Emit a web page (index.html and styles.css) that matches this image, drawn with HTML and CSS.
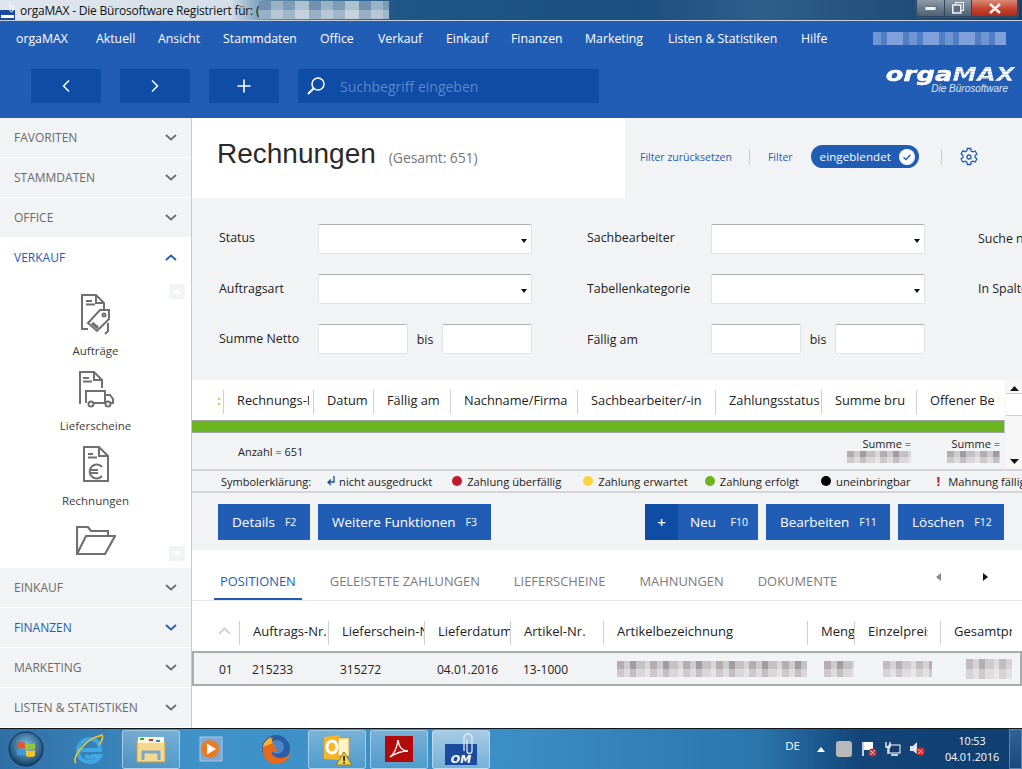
FILE: index.html
```html
<!DOCTYPE html>
<html lang="de">
<head>
<meta charset="utf-8">
<title>orgaMAX - Rechnungen</title>
<link rel="stylesheet" href="styles.css">
</head>
<body>
<div class="window">
  <div class="titlebar">
    <svg class="app-icon" width="15" height="17" viewBox="0 0 15 17"><rect y="7" width="15" height="10" fill="#1c4a9c"/><path d="M10 1v7a2 2 0 0 0 3 0V2" fill="none" stroke="#fff" stroke-width="1"/><rect x="1" y="12" width="13" height="3" fill="#fff"/></svg>
    <span class="title-text">orgaMAX - Die Bürosoftware Registriert für: (</span>
    <span class="mosaic mosaic-title"></span>
    <div class="win-controls">
      <span class="win-btn win-min"><svg width="12" height="5" viewBox="0 0 12 5"><rect width="11" height="4" y="0.5" fill="#eef2f6" stroke="#3a4a5c" stroke-width=".6"/></svg></span>
      <span class="win-btn win-max"><svg width="12" height="12" viewBox="0 0 12 12"><rect x="3.5" y=".5" width="8" height="8" fill="none" stroke="#eef2f6"/><rect x=".8" y="3" width="8" height="8" fill="#5d6f80" stroke="#eef2f6" stroke-width="1.5"/></svg></span>
      <span class="win-btn win-close"><svg width="14" height="11" viewBox="0 0 14 11"><path d="M2 1l10 9M12 1L2 10" stroke="#f4efee" stroke-width="2.6"/></svg></span>
    </div>
  </div>

  <header class="app-header">
    <nav class="menu">
      <a class="menu-item">orgaMAX</a>
      <a class="menu-item">Aktuell</a>
      <a class="menu-item">Ansicht</a>
      <a class="menu-item">Stammdaten</a>
      <a class="menu-item">Office</a>
      <a class="menu-item">Verkauf</a>
      <a class="menu-item">Einkauf</a>
      <a class="menu-item">Finanzen</a>
      <a class="menu-item">Marketing</a>
      <a class="menu-item">Listen &amp; Statistiken</a>
      <a class="menu-item">Hilfe</a>
      <span class="mosaic mosaic-user"></span>
    </nav>
    <div class="toolbar">
      <button class="tool-btn"><svg width="10" height="14" viewBox="0 0 10 14"><path d="M8 1.5L2.5 7 8 12.5" fill="none" stroke="#fff" stroke-width="1.5"/></svg></button>
      <button class="tool-btn"><svg width="10" height="14" viewBox="0 0 10 14"><path d="M2 1.5L7.5 7 2 12.5" fill="none" stroke="#fff" stroke-width="1.5"/></svg></button>
      <button class="tool-btn"><svg width="14" height="14" viewBox="0 0 14 14"><path d="M7 .5v13M.5 7h13" fill="none" stroke="#fff" stroke-width="1.6"/></svg></button>
      <div class="search">
        <svg width="20" height="20" viewBox="0 0 20 20"><circle cx="12" cy="8" r="6" fill="none" stroke="#fff" stroke-width="1.5"/><path d="M7.5 12.5L2 18" fill="none" stroke="#fff" stroke-width="2"/></svg>
        <span class="search-text">Suchbegriff eingeben</span>
      </div>
      <div class="logo">
        <div class="logo-main">orga<span class="logo-max">MAX</span></div>
        <div class="logo-sub">Die Bürosoftware</div>
      </div>
    </div>
  </header>

  <div class="main">
    <aside class="sidebar">
      <div class="side-item"><span>FAVORITEN</span><svg class="chev" width="12" height="7" viewBox="0 0 12 7"><path d="M1 1l5 4.5L11 1" fill="none" stroke="#6e6e6e" stroke-width="1.8"/></svg></div>
      <div class="side-item"><span>STAMMDATEN</span><svg class="chev" width="12" height="7" viewBox="0 0 12 7"><path d="M1 1l5 4.5L11 1" fill="none" stroke="#6e6e6e" stroke-width="1.8"/></svg></div>
      <div class="side-item"><span>OFFICE</span><svg class="chev" width="12" height="7" viewBox="0 0 12 7"><path d="M1 1l5 4.5L11 1" fill="none" stroke="#6e6e6e" stroke-width="1.8"/></svg></div>
      <div class="side-item side-open"><span>VERKAUF</span><svg class="chev" width="12" height="7" viewBox="0 0 12 7"><path d="M1 6l5-4.5L11 6" fill="none" stroke="#225db5" stroke-width="1.8"/></svg></div>
      <div class="side-panel">
        <span class="side-scroll side-scroll-up"><svg width="10" height="5" viewBox="0 0 10 5"><path d="M5 0l5 5H0z" fill="#fff"/></svg></span>
        <div class="sub-item sub-first">
          <svg class="sub-icon" width="32" height="42" viewBox="0 0 32 42"><g fill="none" stroke="#707070" stroke-width="2"><path d="M8 36H2V2h14l8 8v8M16 2v8h8"/><path d="M6 8h6M6 11.500h9"/><path d="M8 30l12-13 9 0 0 9-12 12z"/><circle cx="24" cy="22" r="1.500"/><path d="M12 30l6 5" stroke-width="3"/><path d="M28 30v8l-3 3"/></g></svg>
          <span class="sub-label">Aufträge</span>
        </div>
        <div class="sub-item">
          <svg class="sub-icon" width="36" height="38" viewBox="0 0 36 38"><g fill="none" stroke="#707070" stroke-width="2"><path d="M2 34V2h14l8 8v8M16 2v8h8"/><path d="M5 8h6M5 11.500h9"/><path d="M8 33V21h19v12M27 25h5l3 4v4h-3"/><circle cx="13" cy="34" r="2.500"/><circle cx="30" cy="34" r="2.500"/><path d="M16 33h11"/></g></svg>
          <span class="sub-label">Lieferscheine</span>
        </div>
        <div class="sub-item">
          <svg class="sub-icon" width="28" height="38" viewBox="0 0 28 38"><g fill="none" stroke="#707070" stroke-width="2"><path d="M2 36V2h15l9 9v25zM17 2v9h9"/><path d="M6 9h5M6 12.500h9" /><path d="M20 22a7 7 0 1 0 0 9M7 25h9M7 28h9" stroke-width="2"/></g></svg>
          <span class="sub-label">Rechnungen</span>
        </div>
        <div class="sub-item sub-last">
          <svg class="sub-icon" width="40" height="30" viewBox="0 0 40 30"><g fill="none" stroke="#707070" stroke-width="2.200"><path d="M1 29V2h11l3 4h17v5"/><path d="M1 29h28l10-18H10z"/></g></svg>
        </div>
        <span class="side-scroll side-scroll-down"><svg width="10" height="5" viewBox="0 0 10 5"><path d="M5 5L0 0h10z" fill="#fff"/></svg></span>
      </div>
      <div class="side-item"><span>EINKAUF</span><svg class="chev" width="12" height="7" viewBox="0 0 12 7"><path d="M1 1l5 4.500L11 1" fill="none" stroke="#6e6e6e" stroke-width="1.800"/></svg></div>
      <div class="side-item side-blue"><span>FINANZEN</span><svg class="chev" width="12" height="7" viewBox="0 0 12 7"><path d="M1 1l5 4.500L11 1" fill="none" stroke="#225db5" stroke-width="1.800"/></svg></div>
      <div class="side-item"><span>MARKETING</span><svg class="chev" width="12" height="7" viewBox="0 0 12 7"><path d="M1 1l5 4.500L11 1" fill="none" stroke="#6e6e6e" stroke-width="1.800"/></svg></div>
      <div class="side-item"><span>LISTEN &amp; STATISTIKEN</span><svg class="chev" width="12" height="7" viewBox="0 0 12 7"><path d="M1 1l5 4.500L11 1" fill="none" stroke="#6e6e6e" stroke-width="1.800"/></svg></div>
    </aside>

    <section class="content">
      <div class="page-head">
        <div class="page-title">
          <h1>Rechnungen</h1>
          <span class="total">(Gesamt: 651)</span>
        </div>
        <div class="page-actions">
          <a class="act-link">Filter zurücksetzen</a>
          <span class="act-sep"></span>
          <a class="act-link">Filter</a>
          <span class="pill">eingeblendet<svg width="16" height="16" viewBox="0 0 16 16"><circle cx="8" cy="8" r="8" fill="#fff"/><path d="M4.500 8.200l2.500 2.300 4.300-4.500" fill="none" stroke="#225db5" stroke-width="1.500"/></svg></span>
          <span class="act-sep act-sep2"></span>
          <svg width="20" height="20" viewBox="0 0 20 20"><g fill="none" stroke="#225db5" stroke-width="1.300"><path d="M8.300 1.500h3.400l.5 2.500 1.600.9 2.400-.9 1.700 3-1.900 1.700v1.600l1.900 1.700-1.700 3-2.400-.9-1.600.9-.5 2.500H8.300l-.5-2.500-1.600-.9-2.400.9-1.700-3 1.900-1.700V8.500L2.100 6.800l1.700-3 2.400.9 1.600-.9z"/><circle cx="10" cy="10" r="2"/></g></svg>
        </div>
      </div>

      <div class="filters">
        <label class="f-label f-up">Status</label>
        <div class="f-select"></div>
        <span></span>
        <label class="f-label f-up">Sachbearbeiter</label>
        <div class="f-select"></div>
        <span></span>
        <label class="f-label">Suche nach</label>

        <label class="f-label">Auftragsart</label>
        <div class="f-select"></div>
        <span></span>
        <label class="f-label">Tabellenkategorie</label>
        <div class="f-select"></div>
        <span></span>
        <label class="f-label">In Spalte</label>

        <label class="f-label">Summe Netto</label>
        <div class="f-range"><div class="f-input"></div><span class="f-bis">bis</span><div class="f-input"></div></div>
        <span></span>
        <label class="f-label f-down">Fällig am</label>
        <div class="f-range"><div class="f-input"></div><span class="f-bis">bis</span><div class="f-input"></div></div>
      </div>

      <div class="grid-wrap">
        <div class="grid-main">
          <div class="grid-head">
            <div class="gh gh0"><span class="drag">:</span></div>
            <div class="gh w90"><span class="clip clip-72">Rechnungs-Nr.</span></div>
            <div class="gh w60">Datum</div>
            <div class="gh w77">Fällig am</div>
            <div class="gh w127">Nachname/Firma</div>
            <div class="gh w138">Sachbearbeiter/-in</div>
            <div class="gh w106">Zahlungsstatus</div>
            <div class="gh w95"><span class="clip clip-70">Summe brutto</span></div>
            <div class="gh wrest">Offener Betrag</div>
          </div>
          <div class="green-row"></div>
          <div class="summary">
            <span class="count">Anzahl = 651</span>
            <div class="sum sum1"><span>Summe =</span><span class="mosaic mosaic-sum"></span></div>
            <div class="sum sum2"><span>Summe =</span><span class="mosaic mosaic-sum"></span></div>
          </div>
        </div>
        <div class="scrollbar">
          <svg width="9" height="5" viewBox="0 0 9 5"><path d="M4.500 0l4.500 5H0z" fill="#111"/></svg>
          <span class="thumb"></span>
          <svg width="9" height="5" viewBox="0 0 9 5"><path d="M4.500 5L0 0h9z" fill="#111"/></svg>
        </div>
      </div>

      <div class="legend">
        <span class="lg-title">Symbolerklärung:</span>
        <span class="lg lg1"><svg width="9" height="12" viewBox="0 0 9 12"><path d="M8 1v6H3M5 4.500L2 7.200 5 10" fill="none" stroke="#1c4a9c" stroke-width="1.300"/></svg>nicht ausgedruckt</span>
        <span class="lg lg2"><i class="dot red"></i>Zahlung überfällig</span>
        <span class="lg lg3"><i class="dot yellow"></i>Zahlung erwartet</span>
        <span class="lg lg4"><i class="dot green"></i>Zahlung erfolgt</span>
        <span class="lg lg5"><i class="dot black"></i>uneinbringbar</span>
        <span class="lg lg6"><b class="excl">!</b>Mahnung fällig</span>
      </div>

      <div class="actions">
        <button class="btn b-details">Details<small>F2</small></button>
        <button class="btn b-more">Weitere Funktionen<small>F3</small></button>
        <button class="btn b-new"><span class="plus">+</span><span class="new-label">Neu<small>F10</small></span></button>
        <button class="btn b-edit">Bearbeiten<small>F11</small></button>
        <button class="btn b-del">Löschen<small>F12</small></button>
      </div>

      <div class="detail">
        <div class="tabs">
          <a class="tab tab-on">POSITIONEN</a>
          <a class="tab">GELEISTETE ZAHLUNGEN</a>
          <a class="tab">LIEFERSCHEINE</a>
          <a class="tab">MAHNUNGEN</a>
          <a class="tab">DOKUMENTE</a>
          <span class="tab-arrows">
            <svg width="5" height="8" viewBox="0 0 5 8"><path d="M5 0v8L0 4z" fill="#888"/></svg>
            <svg width="5" height="8" viewBox="0 0 5 8"><path d="M0 0v8l5-4z" fill="#111"/></svg>
          </span>
        </div>
        <div class="pos-head">
          <div class="ph p48"><svg width="13" height="8" viewBox="0 0 13 8"><path d="M1 7l5.500-5.500L12 7" fill="none" stroke="#c8c8c8" stroke-width="1.600"/></svg></div>
          <div class="ph p89">Auftrags-Nr.</div>
          <div class="ph p96">Lieferschein-Nr.</div>
          <div class="ph p86">Lieferdatum</div>
          <div class="ph p93">Artikel-Nr.</div>
          <div class="ph p204">Artikelbezeichnung</div>
          <div class="ph p47">Menge</div>
          <div class="ph p86"><span class="clip clip-60">Einzelpreis</span></div>
          <div class="ph prest">Gesamtpreis</div>
        </div>
        <div class="pos-row">
          <span class="pc q33">01</span>
          <span class="pc q88">215233</span>
          <span class="pc q97">315272</span>
          <span class="pc q86">04.01.2016</span>
          <span class="pc q94">13-1000</span>
          <span class="mosaic mosaic-desc"></span>
          <span class="mosaic mosaic-qty"></span>
          <span class="mosaic mosaic-price"></span>
          <span class="mosaic mosaic-total"></span>
        </div>
      </div>
    </section>
  </div>

  <footer class="taskbar">
    <svg class="orb" width="36" height="36" viewBox="0 0 36 36"><defs><radialGradient id="orbg" cx=".5" cy=".4" r=".6"><stop offset="0" stop-color="#7fc0e8"/><stop offset="1" stop-color="#123f66"/></radialGradient></defs><circle cx="18" cy="18" r="17" fill="url(#orbg)" stroke="#123049"/><path d="M9 12q4-2 8 0v6q-4-2-8 0z" fill="#e8552a"/><path d="M18 12q4 2 9 0v6q-5 2-9 0z" fill="#8dc63f"/><path d="M9 19q4-2 8 0v6q-4-2-8 0z" fill="#3a9ce0"/><path d="M18 19q4 2 9 0v6q-5 2-9 0z" fill="#f7c52b"/></svg>
    <svg class="tb-ie" width="32" height="32" viewBox="0 0 32 32"><path d="M8 17h20c0-7-4-11-10-11S6 11 6 18s5 11 12 11c5 0 8-2 10-6h-7c-1 2-6 2-7-1" fill="none" stroke="#3fa7e6" stroke-width="4"/><path d="M4 30C-1 26 12 6 30 2c2 3-1 7-3 10" fill="none" stroke="#f3c422" stroke-width="1.600"/></svg>
    <span class="tb-btn tb-explorer"><svg width="32" height="30" viewBox="0 0 32 30"><path d="M2 6h10l2 2h16v20H2z" fill="#f4d88e" stroke="#c69c3f"/><rect x="3" y="3" width="26" height="6" fill="#fff6d8"/><rect x="5" y="4" width="4" height="2" fill="#3ea63e"/><rect x="14" y="5" width="4" height="2" fill="#c33"/><rect x="21" y="6" width="4" height="2" fill="#38c"/><path d="M8 26V18h16v8" fill="none" stroke="#7ba7c9" stroke-width="3"/></svg></span>
    <svg class="tb-wmp" width="28" height="28" viewBox="0 0 28 28"><rect x="2" y="2" width="22" height="24" fill="#7ea9d3" stroke="#a9c7e2"/><circle cx="12" cy="14" r="9" fill="#ea7a1c"/><path d="M9 8.500l9 5.500-9 5.500z" fill="#fff"/></svg>
    <svg class="tb-fx" width="32" height="32" viewBox="0 0 32 32"><circle cx="17" cy="16" r="14" fill="#2a5fa8"/><circle cx="18" cy="14" r="7" fill="#4a86c8"/><path d="M4 13C2 24 9 31 17 31c8 0 14-5 15-13-2 5-6 7-11 7-6 0-9-4-8-7 3 1 5 0 6-1-3-1-4-3-3-5-3 0-4-3-2-7C8 7 5 9 4 13z" fill="#e8691c"/><path d="M4 14C5 9 8 6 12 4c1 3 1 5 2 6" fill="#f7b32b"/></svg>
    <span class="tb-btn tb-outlook"><svg width="30" height="31" viewBox="0 0 30 31"><path d="M2 3l16-2v25L2 25z" fill="#f5b726"/><rect x="16" y="4" width="11" height="18" fill="#fff3cc" stroke="#e0a020"/><ellipse cx="10" cy="13" rx="5" ry="6" fill="none" stroke="#fff" stroke-width="3"/><path d="M22 18l8 13H14z" fill="#f2d24a" stroke="#8c7418"/><rect x="21.300" y="22" width="1.500" height="5"/><rect x="21.300" y="28" width="1.500" height="1.500"/></svg></span>
    <span class="tb-btn tb-pdf"><svg width="28" height="26" viewBox="0 0 28 26"><rect width="28" height="26" fill="#b30b0b"/><path d="M5 21c4-3 7-10 8-17 1 8 4 11 10 11-6 0-12 2-18 6z" fill="none" stroke="#fff" stroke-width="1.400"/></svg></span>
    <span class="tb-btn tb-om"><svg width="32" height="32" viewBox="0 0 32 32"><rect y="11" width="32" height="21" fill="#1c4a9c"/><path d="M19 18V5a4 4 0 0 1 8 0v13a2.500 2.500 0 0 1-5 0V7" fill="none" stroke="#dfe8f2" stroke-width="1.300"/><text x="16" y="30" font-family="DejaVu Sans" font-weight="700" font-style="italic" font-size="11" text-anchor="middle" fill="#fff">OM</text></svg></span>
    <div class="tray">
      <span class="lang">DE</span>
      <svg width="8" height="5" viewBox="0 0 8 5"><path d="M4 0l4 5H0z" fill="#fff"/></svg>
      <span class="tray-box"></span>
      <svg width="16" height="16" viewBox="0 0 16 16"><path d="M2 1v14" stroke="#fff" stroke-width="1.500"/><path d="M3 1h9v8H3z" fill="#fff"/><circle cx="11.500" cy="11.500" r="4" fill="#d62b2b"/><path d="M9.500 9.500l4 4M13.500 9.500l-4 4" stroke="#fff"/></svg>
      <svg width="16" height="16" viewBox="0 0 16 16"><rect x="4" y="4" width="11" height="8" fill="#143a66" stroke="#fff"/><path d="M1 1v5h4V1M3 6v7" fill="none" stroke="#fff" stroke-width="1.300"/><path d="M6 14h7" stroke="#fff" stroke-width="1.500"/></svg>
      <svg width="16" height="16" viewBox="0 0 16 16"><path d="M1 5h3l4-4v12L4 10H1z" fill="#dfe8f0"/><circle cx="11.500" cy="10.500" r="4" fill="#d62b2b"/><path d="M9.500 8.500l4 4M13.500 8.500l-4 4" stroke="#fff"/></svg>
      <div class="clock"><span>10:53</span><span>04.01.2016</span></div>
      <span class="show-desktop"></span>
    </div>
  </footer>
</div>
</body>
</html>
```
FILE: styles.css
```css
* { box-sizing: border-box; }
html, body { margin: 0; padding: 0; }
body { font-family: "Open Sans", "Noto Sans", sans-serif; color: #222; font-size: 12px; }
.window { width: 1022px; height: 769px; display: flex; flex-direction: column; overflow: hidden; }
button { font-family: inherit; border: 0; padding: 0; cursor: pointer; }
.clip { display: block; overflow: hidden; }
.clip-72 { width: 72px; }
.clip-70 { width: 70px; }
.clip-60 { width: 60px; }

.mosaic {
  display: block; flex: none;
  background-image:
    linear-gradient(180deg, transparent 0 50%, rgba(255,255,255,.35) 50% 100%),
    repeating-linear-gradient(90deg, #b3adb0 0 7px, #cdcbcc 7px 13px, #a29ca0 13px 19px, #c4c1c3 19px 28px, #d8d6d7 28px 33px);
}

.titlebar { height: 21px; flex: none; display: flex; align-items: flex-start; position: relative; border-bottom: 1px solid #c6d0dc;
  background: linear-gradient(90deg, #dfe5ec 0, #d5dfe9 230px, #5e8aac 270px, #1f5686 400px, #1b4f7f 640px, #2e5f8b 760px, #153f6b 1022px); }
.app-icon { margin-top: 3px; flex: none; }
.title-text { font-size: 12px; line-height: 22px; margin-left: 5px; white-space: nowrap; color: #111; letter-spacing: -.2px; }
.mosaic-title { width: 130px; height: 18px; margin-top: 1px; background-image:
    linear-gradient(180deg, rgba(255,255,255,.1) 0 50%, rgba(255,255,255,.35) 50% 100%),
    repeating-linear-gradient(90deg, #5f86a8 0 12px, #8eaabf 12px 24px, #6d90ac 24px 36px, #a4bac9 36px 50px); }
.win-controls { margin-left: auto; margin-right: 4px; display: flex; height: 17px; border: 1px solid #32465b; border-top: 0; border-radius: 0 0 4px 4px; overflow: hidden; box-shadow: 0 0 1px #cfd8e2; }
.win-btn { display: flex; align-items: center; justify-content: center; border-right: 1px solid #32465b; }
.win-min { width: 28px; background: linear-gradient(180deg, #8e9aa8, #4d6072); }
.win-max { width: 27px; background: linear-gradient(180deg, #8e9aa8, #4d6072); }
.win-close { width: 45px; border-right: 0; background: linear-gradient(180deg, #d98a76 0, #c5442f 55%, #b02c1a); }

.app-header { height: 97px; flex: none; background: #225db5; }
.menu { height: 35px; display: grid; grid-template-columns: 80px 62px 65px 97px 58px 68px 65px 74px 83px 133px 72px 133px; align-items: center; padding-left: 16px; color: #fff; font-size: 12.300px; }
.menu-item { white-space: nowrap; }
.mosaic-user { width: 133px; height: 13px; background-image:
  repeating-linear-gradient(90deg, #6f95d2 0 8px, #4f7fc6 8px 14px, #7fa0d8 14px 30px, #4f7ec5 30px 36px); }
.toolbar { height: 62px; display: flex; padding: 13px 7px 0 31px; align-items: flex-start; }
.tool-btn { width: 70px; height: 34px; margin-right: 19px; background: #0f4ca5; display: flex; align-items: center; justify-content: center; }
.search { width: 301px; height: 34px; background: #0f4ca5; display: flex; align-items: center; padding-left: 8px; }
.search-text { margin-left: 14px; color: #5e87c9; font-size: 14px; }
.logo { margin-left: auto; color: #fff; text-align: right; font-family: "DejaVu Sans", sans-serif; font-style: italic; margin-top: -4px; }
.logo-main { font-size: 20px; font-weight: 700; line-height: 19px; letter-spacing: .2px; -webkit-text-stroke: .5px #fff; transform: scaleX(1.28); transform-origin: right center; }
.logo-max { font-size: 19px; background: repeating-linear-gradient(180deg, #fff 0 2px, #c8d8f0 2px 3px); -webkit-background-clip: text; background-clip: text; color: transparent; -webkit-text-stroke: 0; }
.logo-sub { font-family: "Liberation Sans", sans-serif; font-size: 10px; line-height: 10px; margin-right: 7px; color: #dce6f5; }

.main { flex: 1; min-height: 0; display: flex; }
.sidebar { width: 192px; flex: none; border-right: 1px solid #c8c9cb; background: #fff; display: flex; flex-direction: column; }
.side-item { height: 40px; flex: none; border-bottom: 1px solid #fff; background: #f2f3f5; color: #6b6b6b; display: flex; align-items: center; justify-content: space-between; padding: 0 14px; font-size: 12px; }
.side-open { background: #fff; color: #225db5; }
.side-blue { color: #225db5; }
.side-panel { height: 290px; flex: none; position: relative; overflow: hidden; padding-top: 12px; display: flex; flex-direction: column; align-items: center; }
.side-scroll { position: absolute; right: 6px; width: 16px; height: 15px; background: #f2f3f5; display: flex; align-items: center; justify-content: center; }
.side-scroll-up { top: 6px; }
.side-scroll-down { bottom: 7px; }
.sub-item { height: 75px; flex: none; width: 100%; display: flex; flex-direction: column; align-items: center; }
.sub-icon { flex: none; margin-top: 5px; }
.sub-label { font-size: 11.500px; color: #3c3c3c; margin-top: 10px; line-height: 16px; }
.sub-first .sub-icon { margin-top: 3px; }
.sub-first .sub-label { margin-top: 8px; }
.sub-last .sub-icon { margin-top: 10px; }

.content { flex: 1; min-width: 0; display: flex; flex-direction: column; background: #f2f3f5; }
.page-head { height: 80px; flex: none; display: flex; }
.page-title { width: 433px; background: #fff; display: flex; align-items: center; padding-left: 25px; padding-bottom: 8px; }
.page-title h1 { margin: 0; font: 400 28px "Liberation Sans", sans-serif; color: #2a2a2a; }
.total { margin-left: 13px; margin-top: 6px; color: #777; font-size: 14px; letter-spacing: -.1px; }
.page-actions { flex: 1; display: flex; align-items: center; padding-left: 15px; padding-bottom: 3px; color: #225db5; font-size: 10.500px; }
.act-link { white-space: nowrap; }
.act-sep { width: 1px; height: 16px; background: #c9cbce; margin: 0 18px 0 17px; }
.act-sep2 { margin: 0 17px 0 22px; }
.pill { width: 108px; height: 23px; background: #225db5; border-radius: 12px; color: #fff; margin-left: 18px; display: flex; align-items: center; justify-content: space-between; padding: 0 4px 0 9px; font-size: 11.500px; letter-spacing: .1px; }

.filters { height: 182px; flex: none; display: grid; grid-template-columns: 99px 214px 55px 124px 214px 53px 100px; grid-auto-rows: 30px; row-gap: 20px; padding: 26px 0 0 27px; width: 900px; font-size: 12.400px; }
.f-label { align-self: center; white-space: nowrap; color: #222; padding-bottom: 1px; }
.f-up { padding-bottom: 3px; }
.f-down { padding-bottom: 0; }
.f-select { background: #fff; border: 1px solid #e0e2e6; border-top-color: #aeb0b3; border-radius: 2px; position: relative; }
.f-select::after { content: ""; position: absolute; right: 4px; top: 14px; border: 3.500px solid transparent; border-top: 4px solid #111; border-bottom: 0; }
.f-range { display: flex; align-items: center; justify-content: space-between; }
.f-input { width: 90px; height: 30px; background: #fff; border: 1px solid #e0e2e6; border-top-color: #aeb0b3; border-radius: 2px; }

.grid-wrap { height: 89px; flex: none; display: flex; }
.grid-main { flex: 1; min-width: 0; display: flex; flex-direction: column; }
.grid-head { height: 40px; background: #fff; display: flex; align-items: flex-start; padding-top: 10px; overflow: hidden; font-size: 12.800px; }
.gh { flex: none; height: 24px; border-right: 1px solid #cfd0d2; padding-left: 13px; overflow: hidden; white-space: nowrap; line-height: 21px; color: #222; }
.gh0 { width: 32px; padding: 0; text-align: right; padding-right: 2px; }
.drag { color: #f2b04a; font-weight: 700; }
.w90 { width: 90px; } .w60 { width: 60px; } .w77 { width: 77px; } .w127 { width: 127px; } .w138 { width: 138px; } .w106 { width: 106px; } .w95 { width: 95px; }
.wrest { width: 78px; border-right: 0; }
.green-row { height: 13px; flex: none; background: #6cb420; border-top: 1px solid #9fa3a6; border-bottom: 1px solid #9fa3a6; border-right: 1px solid #c8c9cb; }
.summary { flex: 1; display: flex; align-items: center; padding: 0 5px 0 46px; font-size: 11px; }
.count { margin-right: auto; }
.sum { display: flex; flex-direction: column; align-items: flex-end; margin-top: -1px; line-height: 12px; }
.sum1 { width: 64px; margin-right: 36px; }
.sum2 { width: 53px; }
.mosaic-sum { height: 12px; width: 100%; margin-top: 1px; }
.scrollbar { width: 17px; flex: none; background: #f7f7f7; display: flex; flex-direction: column; align-items: center; padding: 6px 0 5px; border-left: 1px solid #f2f3f5; }
.thumb { display: block; height: 23px; width: 100%; margin-top: 2px; margin-bottom: auto; background: #fff; border-top: 1px solid #ccc; border-bottom: 1px solid #ccc; }

.legend { height: 24px; flex: none; border-top: 2px solid #d4d5d7; border-bottom: 2px solid #d4d5d7; display: flex; align-items: center; padding-left: 29px; font-size: 11.200px; white-space: nowrap; overflow: hidden; }
.lg-title { margin-right: 15px; font-size: 11px; }
.lg { display: flex; align-items: center; flex: none; }
.lg1 svg { margin-right: 4px; }
.lg2 { margin-left: 20px; }
.lg3 { margin-left: 22px; }
.lg4 { margin-left: 17px; }
.lg5 { margin-left: 22px; }
.dot { width: 10px; height: 10px; border-radius: 50%; margin-right: 5px; flex: none; }
.red { background: #c11a2a; } .yellow { background: #f9d33d; } .green { background: #6cb420; } .black { background: #000; }
.excl { color: #c11a2a; margin-right: 8px; margin-left: 2px; font-size: 13px; }
.lg6 { margin-left: 24px; }

.actions { height: 57px; flex: none; display: flex; padding: 11px 18px 10px 26px; align-items: stretch; gap: 8px; }
.btn { background: #225db5; color: #fff; font-size: 13.500px; padding: 0 14px; display: flex; align-items: center; justify-content: space-between; flex: none; white-space: nowrap; }
.btn small { font-size: 10.500px; margin-left: 10px; }
.b-details { width: 92px; }
.b-more { width: 173px; }
.b-new { width: 113px; padding: 0; margin-left: 146px; justify-content: flex-start; }
.plus { width: 33px; height: 100%; background: #0f4ca5; display: flex; align-items: center; justify-content: center; font-size: 15px; flex: none; font-weight: 600; }
.new-label { flex: 1; display: flex; justify-content: space-between; align-items: center; padding: 0 10px 0 12px; }
.b-edit { width: 124px; }
.b-del { width: 106px; }

.detail { flex: 1; min-height: 0; background: #fff; }
.tabs { height: 51px; display: flex; align-items: stretch; border-bottom: 1px solid #e4e5e7; padding-left: 22px; position: relative; }
.tab { font-size: 12.900px; color: #7a7a7a; padding: 0 6px; margin-right: 22px; display: flex; align-items: center; white-space: nowrap; border-bottom: 2px solid transparent; padding-top: 14px; }
.tab-on { color: #225db5; border-bottom-color: #225db5; }
.tab-arrows { position: absolute; left: 744px; top: 23px; width: 52px; display: flex; justify-content: space-between; }
.pos-head { height: 50px; display: flex; padding-top: 20px; align-items: flex-start; font-size: 13px; }
.ph { flex: none; height: 24px; border-right: 1px solid #cfd0d2; padding-left: 13px; overflow: hidden; white-space: nowrap; line-height: 20px; }
.p48 { width: 48px; padding-left: 26px; display: flex; align-items: center; padding-bottom: 4px; }
.p89 { width: 89px; } .p96 { width: 96px; } .p86 { width: 86px; } .p93 { width: 93px; } .p204 { width: 204px; } .p47 { width: 47px; }
.prest { width: 71px; border-right: 0; }
.pos-row { height: 35px; background: #f2f3f5; border: 2px solid #a9abad; display: flex; align-items: center; padding: 1px 0 0 25px; font-size: 12px; }
.pc { flex: none; white-space: nowrap; }
.q33 { width: 33px; } .q88 { width: 88px; } .q97 { width: 97px; } .q86 { width: 86px; } .q94 { width: 94px; }
.mosaic-desc { width: 190px; height: 16px; filter: blur(.5px); }
.mosaic-qty { width: 30px; height: 16px; margin-left: 17px; filter: blur(.5px); }
.mosaic-price { width: 49px; height: 16px; margin-left: 29px; filter: opacity(.8) blur(.5px); }
.mosaic-total { width: 46px; height: 20px; margin-left: 34px; filter: opacity(.8) blur(.5px); }

.taskbar { height: 41px; flex: none; display: flex; align-items: center; border-top: 1px solid #10161e; padding-left: 8px; position: relative;
  background: linear-gradient(90deg, #2f6fa6 0, #3f93c9 200px, #3c8fc6 500px, #2a75ad 760px, #134578 860px, #0f3e70 1022px); }
.orb { flex: none; }
.tb-ie { margin-left: 28px; flex: none; }
.tb-btn { width: 58px; height: 39px; flex: none; display: flex; align-items: center; justify-content: center; border: 1px solid rgba(220,238,250,.55); border-radius: 3px; background: linear-gradient(180deg, rgba(255,255,255,.3), rgba(255,255,255,.1)); }
.tb-explorer { margin-left: 18px; }
.tb-wmp { margin-left: 18px; flex: none; }
.tb-fx { margin-left: 33px; flex: none; }
.tb-outlook { margin-left: 17px; }
.tb-pdf { margin-left: 4px; }
.tb-om { margin-left: 4px; background: linear-gradient(180deg, rgba(255,255,255,.55), rgba(255,255,255,.3)); }
.tray { margin-left: auto; display: flex; align-items: center; height: 100%; color: #fff; }
.lang { font-size: 11.500px; margin-right: 17px; padding-bottom: 8px; }
.tray > svg { flex: none; margin-right: 8px; }
.tray-box { width: 16px; height: 16px; background: #b9b9b9; border-radius: 3px; margin: 0 9px 0 3px; }
.clock { display: flex; flex-direction: column; align-items: center; font-size: 10.800px; line-height: 16px; margin-left: 11px; width: 56px; letter-spacing: -.1px; }
.show-desktop { width: 13px; height: 100%; margin-left: 9px; border: 1px solid #5b85ad; background: linear-gradient(180deg,#2f6398,#174b80); }
```
